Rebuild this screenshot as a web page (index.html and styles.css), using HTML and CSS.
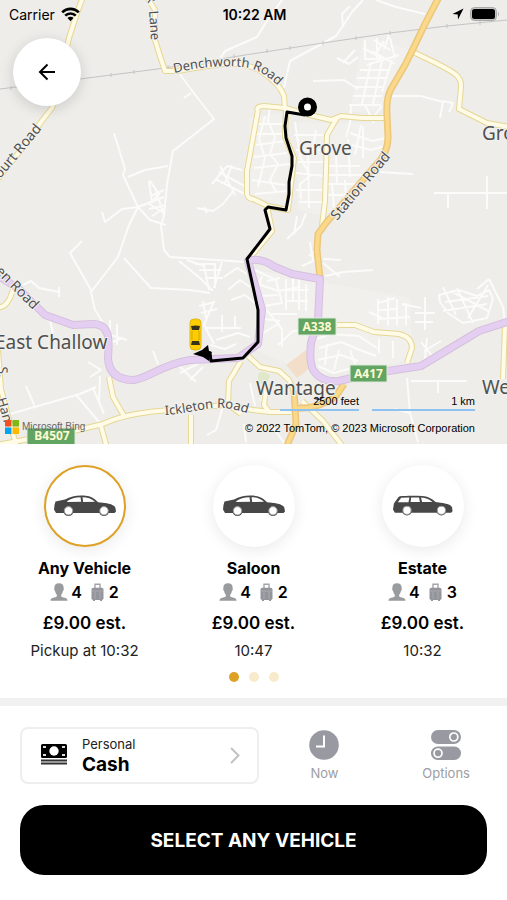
FILE: index.html
```html
<!DOCTYPE html>
<html lang="en">
<head>
<meta charset="utf-8">
<meta name="viewport" content="width=device-width, initial-scale=1">
<title>Select a vehicle</title>
<link rel="stylesheet" href="styles.css">
</head>
<body>
<svg class="defs" aria-hidden="true">
  <defs>
    <symbol id="saloon" viewBox="0 0 64 22">
      <path fill="#474747" d="M1 14.5 1.5 10 2.5 6.6 12 4.6C17 2 22 .6 28 .6c7 0 11 1 16 5.600l1 1 7 .8c5 .8 9 2 10.300 4.400L63 16.500 61.500 18H3z"/>
      <path fill="#fff" d="M14 6.200C18 3.600 22 2.400 27.500 2.200l.7 4.600-13.700.1zM29.500 2.200c5 0 9 1.400 12.500 4.600l-11.800.2z"/>
      <circle cx="15.500" cy="15.800" r="5.200" fill="#474747"/><circle cx="15.500" cy="15.800" r="4.200" fill="#fff" stroke="#999" stroke-width="1"/>
      <circle cx="51" cy="15.800" r="5.200" fill="#474747"/><circle cx="51" cy="15.800" r="4.200" fill="#fff" stroke="#999" stroke-width="1"/>
    </symbol>
    <symbol id="estate" viewBox="0 0 64 22">
      <path fill="#474747" d="M1 14.500 2 8.500 6.500 2 8 1C15 .3 24 .2 31 .8c6 .6 9 2 14 6l7 1c5 .8 9 2 10 4.500l.5 4.200-1.500 1.500H3z"/>
      <path fill="#fff" d="m6 7 3.500-4.500 8.500-.4-1 4.900zM19.800 2.200h8.200l.8 4.700h-9.600zM30 2.200c5 .3 8 1.500 11.800 4.600H31z"/>
      <circle cx="15.500" cy="15.500" r="5.200" fill="#474747"/><circle cx="15.500" cy="15.500" r="4.200" fill="#fff" stroke="#999" stroke-width="1"/>
      <circle cx="51" cy="15.500" r="5.200" fill="#474747"/><circle cx="51" cy="15.500" r="4.200" fill="#fff" stroke="#999" stroke-width="1"/>
    </symbol>
    <symbol id="person" viewBox="0 0 18 18">
      <path fill="#999b9d" d="M9 .2c3.200 0 4.700 1.600 4.600 4.600 0 .7.300 1 .2 1.700-.1.800-.7 1-.9 1.800-.3 1.500-.9 2.600-1.700 3.400-.2 1.500.1 2.200 1.600 2.600 2.800.6 4.600 1 4.800 3.500H.4c.2-2.500 2-2.900 4.800-3.500 1.500-.4 1.800-1.100 1.600-2.600-.8-.8-1.400-1.900-1.700-3.400-.2-.8-.8-1-.9-1.800-.1-.7.200-1 .2-1.700C4.300 1.800 5.800.2 9 .2z"/>
    </symbol>
    <symbol id="bag" viewBox="0 0 13 18">
      <path d="M4 5V1.200h5V5" fill="none" stroke="#a3a4a8" stroke-width="1.400"/>
      <rect x=".5" y="4.800" width="12" height="12.200" rx="1.800" fill="#94959b"/>
      <path d="M1 8h11M4 9v7M9 9v7" stroke="#aeaeb5" stroke-width=".8"/>
      <path d="M2 17h2v1H2zM9 17h2v1H9z" fill="#94959b"/>
    </symbol>
  </defs>
</svg>

<main class="app">
  <section class="map" aria-label="Map of Wantage and Grove">
    <svg class="map-art" viewBox="0 0 507 444" preserveAspectRatio="xMidYMid slice">
      <defs>
        <path id="denchworth" d="M174 73C200 67 222 65 242 67S270 78 292 99"/>
        <path id="ickleton" d="M165 415C185 414 200 409 215 408S240 411 266 419"/>
        <g id="minor-roads">
          <path d="M160 56 165 70 179 73 193 92 214 119 173 151 167 184 164 215 161 226 164 250 170 257 246 262"/>
          <path d="M184 98 191 93M114 133 125 169 123 175 138 207 129 225M128 177 145 170 168 166M138 207 164 197M138 207 122 209 105 222 102 212M138 207 150 220 166 225M148 203 165 214M150 181l9 13-7 8-3-20z"/>
          <path d="M151 196 164 190M149 209 166 205M152 216 165 208M156 190 163 213"/>
          <path d="M129 225 118 257 91 292 95 310 105 326M91 290 70 253 82 241M124 258 151 288 190 290 210 293M179 261 200 278 213 291"/>
          <path d="M187 260 204 266 209 290M195 264h20v24M199 270h22M205 278h18M222 262 214 288M224 277 237 268 247 274M228 290 240 280 250 287M231 300 245 295 255 303"/>
          <path d="M199 306 215 302M201 313 217 309M203 301 206 318M214 301 204 325 214 344M205 328h36M222 315v17M235 316v12M216 340 238 333 250 337"/>
          <path d="M110 320v21M117 324v21M107 334 127 340M105 345 122 338M23 285 31 281 39 288 59 292v-5M59 290v7M30 295 49 316 53 333"/>
          <path d="M10 414 80 394 96 387M26 386 35 407M77 396 99 422M93 388 104 414M100 376 99 401M88 362 101 370 90 377"/>
          <path d="M153 351 158 364M178 365 196 382M190 380 203 367M180 373 199 363"/>
          <path d="M282 0 265 24 257 37 225 51 215 67M284 88 290 61 336 36 352 12 363 0M350 6 342 14 343 27M376 0 396 7 425 14"/>
          <path d="M313 81 344 80 358 89M337 58 349 64 358 57M343 63 355 50M365 40v20M377 38v21M363 48 382 58M365 59h24M367 65 399 55M360 70h30M357 78h30M355 87h28M353 96h29M349 105h32M371 62 362 104M382 61 373 104M392 60 382 92"/>
          <path d="M374 40l16 10M384 41 376 54M390 38l5 20M372 51l23 13M389 35 384 49M351 106 350 123 346 137M365 105 374 123M382 106 372 119M350 133 372 141 386 138M352 145 371 150 385 146M361 125 355 155"/>
          <path d="M212 184 227 166 242 170M215 179 247 195M219 172 248 188M220 166 235 195M232 165 225 183M234 190 223 204 213 211 197 208M204 207 207 213"/>
          <path d="M270 106 268 121 275 137 270 154 278 164 270 180 276 192M257 124h31M257 134h25M256 145 285 141M254 157 287 153M254 168 290 164M252 180 285 185M255 194 287 191M265 116 259 139 265 158 258 187"/>
          <path d="M295 122 298 143 301 158 310 176 300 184 301 199M294 135h29M296 150h27M298 162h27M296 173 325 176M296 190h29M299 202h25M308 147 309 208M316 130 312 153"/>
          <path d="M327 166h33M327 175h45M327 184h37M327 195h27M336 154 337 183M348 139 350 177M363 126 363 158M332 184 334 208M345 180 346 200M380 172 413 174M391 96 421 96 443 102 440 118M443 101 453 103 449 112"/>
          <path d="M434 193h73M448 193v15M487 176v33M306 213 301 226 287 239M297 216 294 234"/>
          <path d="M323 259 341 260M323 263 340 277M325 276 343 272 373 270M310 242 313 261 302 266M317 249 309 256"/>
          <path d="M255 270 276 280 282 303 264 306M262 276 256 294M267 281 280 278M258 284 278 291 300 287M261 296 278 295M264 307 282 329 282 347M271 314 297 314M286 279v31M299 279v31M306 284v27M286 290h23M287 301h21M293 277v25M257 318 280 321M263 333 280 323M278 345 293 331 307 330"/>
          <path d="M378 299v25M388 297v28M397 299v26M406 303v22M378 303 395 298M378 310 397 309M378 319 410 317M369 312 382 318M425 297v33M415 313h20M415 322h18M402 304 421 308"/>
          <path d="M439 295 459 290 477 296 489 290 493 299 487 318 463 323 448 313 440 302zM443 287 456 315M457 288 473 323M488 285 468 318M443 311 487 304M451 291 490 312M445 302 488 296M489 279 503 307 505 322M489 279 477 289"/>
          <path d="M319 348 341 342 360 350 376 356M317 339 330 334 359 336 377 348M318 360 341 355 358 361M339 350 334 370M350 350 358 372M327 344 325 365M318 366 334 373 349 369M421 342 433 357M424 351 441 341M427 338 425 359M407 378 410 413M411 381h56M438 381v12M418 442 410 413 394 409M379 339v14M393 341v17"/>
          <path d="M223 406 216 430 207 435M261 401 267 382M250 383 255 406M244 424 246 442M272 426 285 444M210 345 225 349 236 344"/>
        </g>
        <g id="local-roads">
          <path d="M83 -3 78 10 69 38 58 90 52 108 41 122 25 145-4 181"/>
          <path d="M147-3 155 10 155 40 160 56 165 71 178 71C210 66 239 57 262 72Q280 84 284 96L285 109"/>
          <path d="M257 110Q257 106 264 106L285 108 310 115 331 120 341 116 362 118 385 118M258 110 247 171 247 194Q248 199 253 199L266 205M337 118 327 135 326 170 325 201 322 226"/>
          <path d="M286 109 285 137 294 158 288 210 267 206 272 231 248 260"/>
          <path d="M411 51 436 63C451 71 462 75 461 87L459 109 487 123 509 127"/>
          <path d="M14 287 10 298Q6 307-3 308M-2 350 1 389 8 416 17 448"/>
          <path d="M-4 445 24 440 78 430 103 424Q124 414 159 411L225 405 253 410 270 412 291 412M109 377 113 397 124 416M101 426 107 448M191 415V448M241 361 229 381 228 405M229 405 241 414M248 356 260 367 279 371 289 380 295 393M267 383 264 405 270 413M302 401 323 421 344 448"/>
          <path d="M337 325 355 325 374 332 399 334Q412 337 412 348L407 363M505 325 503 379"/>
        </g>
        <g id="orange-roads">
          <path d="M439-3 425 24 413 49 405 65 391 89Q386 98 387 115L388 137Q388 154 375 166L326 223 318 234 317 250 320 278"/>
          <path d="M294 390 296 424 286 448M294 408Q318 410 336 396L344 384"/>
        </g>
        <path id="trunk-road" d="M-4 274 20 290 45 315 73 325 94 324C111 325 109 342 108 358Q109 380 134 380C149 378 163 364 190 360L238 358 258 344 262 309 248 261Q260 257 275 267L292 274 320 279 318 320 311 343Q309 361 313 370 322 383 339 381L369 374 421 366 479 331 510 321"/>
      </defs>
      <rect width="507" height="444" fill="#eeedea"/>
      <path fill="#f1f0ed" d="M249 118 289 112 287 207 250 194zM298 123 385 122 387 158 327 217 298 210zM364 35 410 50 385 110 350 112zM255 270 410 298 412 360 315 376 255 350z"/>
      <path fill="#f3dfc9" d="m286 365 20-15 4 18-13 10z"/><path fill="#dfe8c9" d="M258 374q6-5 12 2l-3 8h-9z"/>
      <use href="#minor-roads" class="minor"/>
      <path class="rail" d="M0 89 80 79 165 68 245 55 323 43 390 33 447 26 507 20"/>
      <path class="rail" d="M11 86v4M111 73v4M134 70v4M168 65v4M234 54v5M267 49v4M290 46v4M323 41v4M356 36v4M390 31v4M447 24v4M480 21v4"/>
      <use href="#local-roads" class="local-edge"/><use href="#local-roads" class="local"/>
      <use href="#orange-roads" class="orange-edge"/><use href="#orange-roads" class="orange"/>
      <use href="#trunk-road" class="trunk-edge"/><use href="#trunk-road" class="trunk"/>
      <g class="road-name">
        <text class="small"><textPath href="#denchworth">Denchworth Road</textPath></text>
        <text class="small"><textPath href="#ickleton">Ickleton Road</textPath></text>
        <text transform="translate(337 221) rotate(-50)">Station Road</text>
        <text transform="translate(0 179) rotate(-50)">ourt Road</text>
        <text class="small" transform="translate(146 -3) rotate(72)">k</text>
        <text class="small" transform="translate(149 11) rotate(86)">Lane</text>
        <text transform="translate(-5 272) rotate(45)">en Road</text>
        <text class="small" transform="translate(-2 367) rotate(86)">S.</text>
        <text class="small" transform="translate(-3 399) rotate(74)">Han</text>
      </g>
      <g class="place">
        <text x="299" y="155">Grove</text><text x="482" y="140">Grove</text>
        <text x="-5" y="349">East Challow</text><text x="256" y="395">Wantage</text><text x="482" y="394">West</text>
      </g>
      <g class="shield">
        <rect x="298" y="318" width="38" height="17" rx="1"/><text x="317" y="331">A338</text>
        <rect x="350" y="365" width="37" height="17" rx="1"/><text x="368.500" y="378">A417</text>
        <rect x="27" y="428" width="48" height="18" rx="1"/><text x="52" y="440">B4507</text>
      </g>
      <path class="route" d="M305 115 287 112 285 126 286 138 292 156 292 166 289 182 289 194 286 210 268 207 265 210 270 229 247 259 258 310 258 342 243 358 211 361 210 353 203 352"/>
      <circle cx="307.500" cy="107" r="6.500" fill="#fff" stroke="#000" stroke-width="6"/>
      <path d="m193 354 9-4 6-5 1 6 3 1-2 3-1 6-6-4z"/>
      <g><rect x="190" y="319" width="11" height="31" rx="4" fill="#fc0" stroke="#dfb817"/><path d="M191 326q5-1 9 0l-1 4h-7zM192 341h7l1 4h-9z" fill="#363119"/><path d="M192 331v9M199 331v9" stroke="#d4a700"/></g>
    </svg>

    <header class="status">
      <span class="carrier">Carrier
        <svg width="19" height="15" viewBox="0 0 19 15" aria-label="Wi-Fi"><g fill="none" stroke="#000" stroke-width="2.600"><path d="M1.200 5.300a11.800 11.800 0 0 1 16.600 0M4.200 8.700a7.500 7.500 0 0 1 10.600 0"/></g><path d="m9.500 14.300-3-3.200a4.200 4.200 0 0 1 6 0z"/></svg>
      </span>
      <time>10:22 AM</time>
      <span class="power">
        <svg width="12" height="12" viewBox="0 0 12 12" aria-label="Location"><path d="M11.500.5.500 6l5.200.4.300 5.100z"/></svg>
        <svg width="30" height="14" viewBox="0 0 30 14" aria-label="Battery full"><rect x=".5" y=".5" width="26" height="13" rx="4" fill="#c5c5c2" stroke="#aaa"/><rect x="2" y="2" width="23" height="10" rx="2.500"/><path d="M28 4.500q2 2.500 0 5z" fill="#aaa"/></svg>
      </span>
    </header>

    <button class="back" type="button" aria-label="Back"><svg width="18" height="18" viewBox="0 0 18 18" fill="none" stroke="#000" stroke-width="2"><path d="M17 9H2M9.500 1.500 2 9l7.500 7.500"/></svg></button>

    <div class="bing">
      <svg width="14" height="14" viewBox="0 0 14 14" aria-hidden="true"><path fill="#f25022" d="M0 0h6.500v6.500H0z"/><path fill="#80b916" d="M7.500 0H14v6.500H7.500z"/><path fill="#00a4ef" d="M0 7.500h6.500V14H0z"/><path fill="#ffb900" d="M7.500 7.500H14V14H7.500z"/></svg>
      <span>Microsoft Bing</span>
    </div>
    <div class="credits">
      <div class="scales"><span class="feet">2500 feet</span><span class="km">1 km</span></div>
      <p>© 2022 TomTom, © 2023 Microsoft Corporation</p>
    </div>
  </section>

  <section class="vehicles" aria-label="Vehicles">
    <div class="vehicle-list">
      <button class="vehicle selected" type="button" aria-pressed="true">
        <span class="disc"><svg width="64" height="22"><use href="#saloon"/></svg></span>
        <strong>Any Vehicle</strong>
        <span class="capacity"><svg width="18" height="18"><use href="#person"/></svg>4<svg class="bag" width="13" height="18"><use href="#bag"/></svg>2</span>
        <span class="price">£9.00 est.</span>
        <span class="pickup">Pickup at 10:32</span>
      </button>
      <button class="vehicle" type="button" aria-pressed="false">
        <span class="disc"><svg width="64" height="22"><use href="#saloon"/></svg></span>
        <strong>Saloon</strong>
        <span class="capacity"><svg width="18" height="18"><use href="#person"/></svg>4<svg class="bag" width="13" height="18"><use href="#bag"/></svg>2</span>
        <span class="price">£9.00 est.</span>
        <span class="pickup">10:47</span>
      </button>
      <button class="vehicle" type="button" aria-pressed="false">
        <span class="disc"><svg width="62" height="22"><use href="#estate"/></svg></span>
        <strong>Estate</strong>
        <span class="capacity"><svg width="18" height="18"><use href="#person"/></svg>4<svg class="bag" width="13" height="18"><use href="#bag"/></svg>3</span>
        <span class="price">£9.00 est.</span>
        <span class="pickup">10:32</span>
      </button>
    </div>
    <div class="dots"><i class="on"></i><i></i><i></i></div>
  </section>

  <footer class="booking">
    <div class="settings">
      <button class="payment" type="button">
        <svg width="26" height="24" viewBox="0 0 26 24" aria-hidden="true"><rect width="26" height="14" rx="1.500"/><circle cx="13" cy="7" r="4.700" fill="#fff"/><path fill="#ddd" d="M2 2h3v2H2zM21 2h3v2h-3zM2 10h3v2H2zM21 10h3v2h-3z"/><path d="M0 16.500h26M0 19.500h26" stroke="#333" stroke-width="2"/></svg>
        <span class="payment-text"><span>Personal</span><strong>Cash</strong></span>
        <svg width="10" height="17" viewBox="0 0 10 17" fill="none" stroke="#c2c2c2" stroke-width="2" aria-hidden="true"><path d="m1 1 7.500 7.500L1 16"/></svg>
      </button>
      <button class="option" type="button">
        <svg width="30" height="30" viewBox="0 0 30 30" aria-hidden="true"><circle cx="15" cy="15" r="14.800" fill="#9899a1"/><path d="M15 5.500v11H7" fill="none" stroke="#fff" stroke-width="2"/></svg>
        Now
      </button>
      <button class="option" type="button">
        <svg width="30" height="30" viewBox="0 0 30 30" aria-hidden="true"><rect width="30" height="14" rx="7" fill="#9899a1"/><rect y="16.500" width="30" height="13.500" rx="6.700" fill="#9899a1"/><g fill="#9899a1" stroke="#fff" stroke-width="1.700"><circle cx="22.800" cy="7" r="4"/><circle cx="7" cy="23.200" r="4"/></g></svg>
        Options
      </button>
    </div>
    <button class="confirm" type="button">SELECT ANY VEHICLE</button>
  </footer>
</main>
</body>
</html>
```

FILE: styles.css
```css
* { box-sizing: border-box; }
body { margin: 0; background: #fff; color: #000; font-family: Inter, "Liberation Sans", sans-serif; }
button { margin: 0; padding: 0; border: 0; background: none; color: inherit; font: inherit; cursor: pointer; }
svg { display: block; flex: none; }
.defs { position: absolute; width: 0; height: 0; }
.app { min-height: 100vh; display: flex; flex-direction: column; }

/* Map */
.map { position: relative; flex: 1; min-height: 320px; overflow: hidden; background: #eeedea; }
.map-art { position: absolute; inset: 0; width: 100%; height: 100%; }
.map-art use { fill: none; stroke-linejoin: round; }
.minor { stroke: #fbfbf9; stroke-width: 2px; }
.rail { fill: none; stroke: #c4c4c4; stroke-width: 1px; }
.local-edge { stroke: #e5d795; stroke-width: 6px; }
.local { stroke: #fffbe6; stroke-width: 4px; }
.orange-edge { stroke: #ebc77d; stroke-width: 7px; }
.orange { stroke: #fcd989; stroke-width: 4px; }
.trunk-edge { stroke: #d5c0dc; stroke-width: 8px; }
.trunk { stroke: #e4cff2; stroke-width: 6px; }
.route { fill: none; stroke: #000; stroke-width: 3px; stroke-linejoin: round; }
.map-art text { font-family: "Noto Sans", "Open Sans", sans-serif; }
.road-name, .place { fill: #505050; stroke: #f3f2ef; stroke-width: 2px; paint-order: stroke; }
.road-name { font-size: 14px; }
.road-name .small { font-size: 13px; }
.place { font-size: 19px; }
.shield rect { fill: #62a462; stroke: #dcebd8; stroke-width: 1px; }
.shield text { fill: #fffbd0; font-size: 12px; font-weight: 700; text-anchor: middle; }

.status { position: absolute; inset: 0 0 auto; height: 28px; padding: 0 7px 0 9px; display: grid; grid-template-columns: 1fr auto 1fr; align-items: center; font-size: 14px; }
.status time { font-weight: 600; }
.carrier, .power { display: flex; align-items: center; gap: 6px; }
.power { justify-content: flex-end; }
.back { position: absolute; left: 13px; top: 38px; width: 68px; height: 68px; border-radius: 50%; background: #fff; box-shadow: 0 3px 14px rgb(0 0 0 / 15%); display: grid; place-items: center; }
.bing { position: absolute; left: 5px; bottom: 10px; display: flex; align-items: center; gap: 3px; color: #666; font: 10px/14px "Liberation Sans", sans-serif; }
.credits { position: absolute; right: 32px; bottom: 8px; font: 11px/16px "Liberation Sans", sans-serif; }
.credits p { margin: 9px 0 0; }
.scales { display: flex; justify-content: flex-end; gap: 13px; text-align: right; }
.scales span { border-bottom: 2px solid #8ec2f2; }
.feet { width: 79px; }
.km { width: 103px; }

/* Vehicle choices */
.vehicles { padding: 21px 0 16px; border-bottom: 8px solid #f1f1f1; }
.vehicle-list { display: grid; grid-template-columns: repeat(3, 1fr); }
.vehicle { display: flex; flex-direction: column; align-items: center; font-size: 16px; line-height: 24px; font-weight: 600; }
.vehicle strong { font-weight: 700; }
.disc { width: 82px; height: 82px; margin-bottom: 9px; border-radius: 50%; background: #fff; box-shadow: 0 3px 16px rgb(0 0 0 / 9%); display: grid; place-items: center; }
.selected .disc { border: 2px solid #dea126; }
.capacity { display: flex; align-items: center; gap: 3px; }
.capacity .bag { margin-left: 6px; margin-right: 2px; }
.price { margin-top: 7px; font-size: 17px; }
.pickup { margin-top: 4px; font-size: 15px; font-weight: 400; color: #222; }
.dots { margin-top: 9px; display: flex; justify-content: center; gap: 10px; }
.dots i { width: 10px; height: 10px; border-radius: 50%; background: #f8ebcb; }
.dots .on { background: #dea126; }

/* Booking controls */
.booking { padding: 21px 0 25px; }
.settings { padding-left: 20px; display: grid; grid-template-columns: 2fr 1fr 1fr; }
.payment { height: 57px; margin-right: 5px; padding: 0 17px 0 19px; border: 2px solid #eee; border-radius: 8px; display: flex; align-items: center; gap: 15px; text-align: left; }
.payment-text { flex: 1; display: flex; flex-direction: column; font-size: 13px; line-height: 18px; color: #222; }
.payment-text strong { font-size: 19px; line-height: 24px; font-weight: 700; color: #000; }
.option { padding-top: 3px; display: flex; flex-direction: column; align-items: center; gap: 4px; font-size: 13px; line-height: 18px; color: #9d9da1; }
.confirm { display: block; width: calc(100% - 40px); height: 70px; margin: 21px 20px 0; border-radius: 24px; background: #000; color: #fff; font-size: 19px; font-weight: 700; }
```
